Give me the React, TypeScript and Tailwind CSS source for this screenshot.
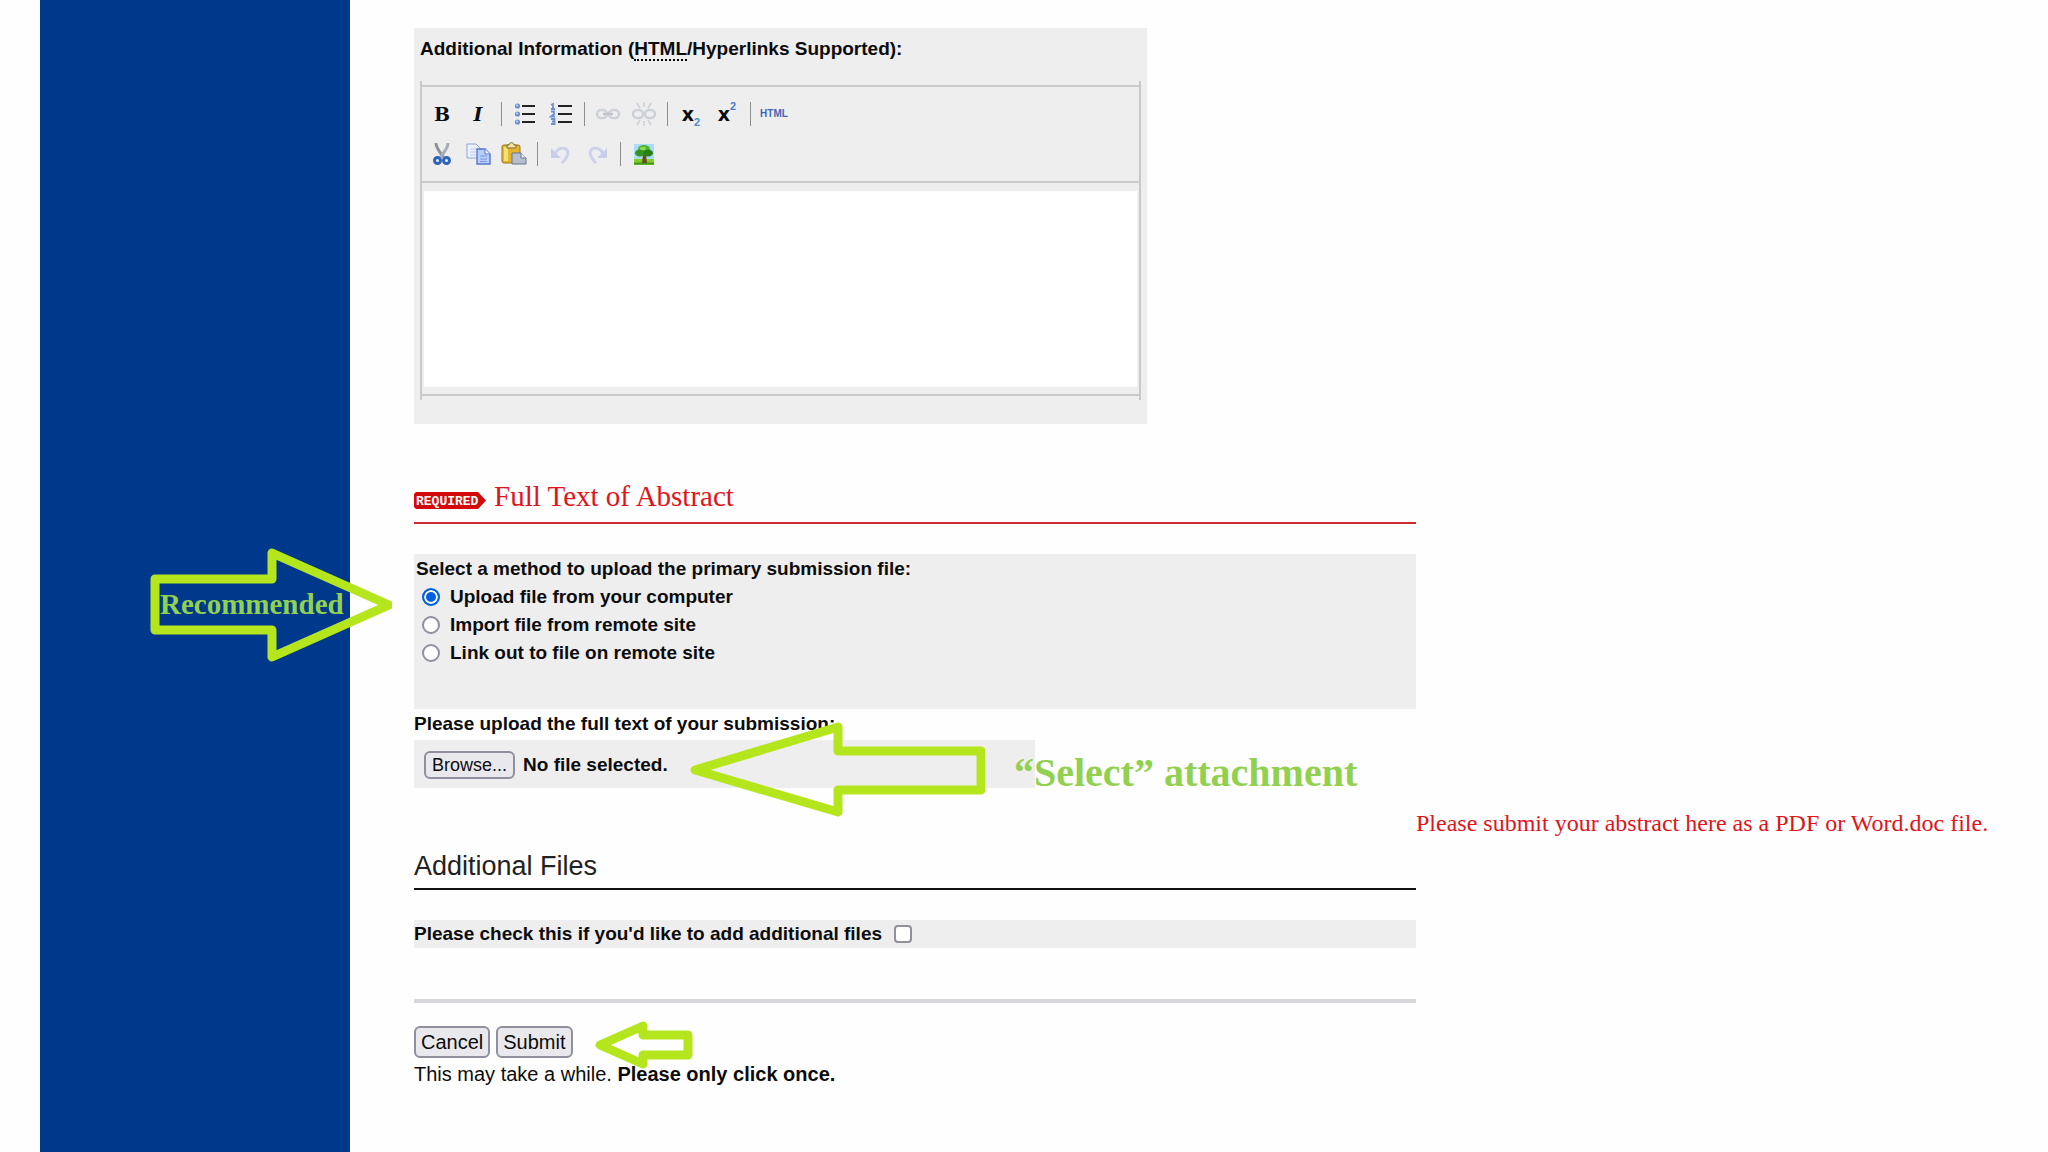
import { useRef } from 'react';
import type { ReactNode } from 'react';

interface ToolButtonProps {
    label: string;
    disabled?: boolean;
    children: ReactNode;
}

function ToolButton({ label, disabled, children }: ToolButtonProps) {
    return (
        <button type="button" aria-label={label} disabled={disabled} className="flex h-7 w-9 items-center justify-center">
            {children}
        </button>
    );
}

function Separator() {
    return (
        <span className="flex w-[11px] justify-center">
            <span className="h-6 w-px bg-[#8f8f8f]" />
        </span>
    );
}

function BulletIcon() {
    return (
        <svg width="22" height="22" viewBox="0 0 22 22">
            {[3, 11, 19].map((y) => (
                <g key={y}>
                    <circle cx="3.5" cy={y} r="2.6" fill="#6f8fd0" />
                    <circle cx="3" cy={y - 0.6} r="0.9" fill="#d5e0f7" />
                    <path d={`M8 ${y}h13`} stroke="#222" strokeWidth="2" />
                </g>
            ))}
        </svg>
    );
}

function NumberIcon() {
    return (
        <svg width="24" height="24" viewBox="0 0 24 24">
            <g fill="none" stroke="#6f8fd0" strokeWidth="1.8">
                <path d="M2 3l2-1v5M2 7h4" />
                <path d="M2 9.500h3v2.500L2 14.500h4" />
                <path d="M2 17h3.500v5H2M3 19.500h2.500" />
            </g>
            <path d="M9 4h14M9 12h14M9 20h14" stroke="#222" strokeWidth="2" />
        </svg>
    );
}

function LinkIcon({ broken }: { broken?: boolean }) {
    return (
        <svg width="26" height="26" viewBox="0 0 26 26" fill="none" stroke="#cdd0d5" strokeWidth="2.400">
            <rect x="2" y="9" width="10" height="8" rx="4" />
            <rect x="14" y="9" width="10" height="8" rx="4" />
            {broken ? (
                <path d="M13 1v5M6 2l3 5M20 2l-3 5M13 20v5M6 24l3-5M20 24l-3-5" strokeWidth="1.500" />
            ) : (
                <path d="M8 13h10" stroke="#bfc3ca" strokeWidth="2.500" />
            )}
        </svg>
    );
}

function CutIcon() {
    return (
        <svg width="18" height="24" viewBox="0 0 18 24" fill="none">
            <path d="M3 1c0 5 3 8 7.500 14" stroke="#8d929c" strokeWidth="3" />
            <path d="M15 1c0 5-3 8-7.500 14" stroke="#a7acb6" strokeWidth="3" />
            <ellipse cx="4.500" cy="18.500" rx="3" ry="3" stroke="#2f64b8" strokeWidth="3" />
            <ellipse cx="13.500" cy="18.500" rx="3" ry="3" stroke="#2f64b8" strokeWidth="3" />
        </svg>
    );
}

function CopyIcon() {
    return (
        <svg width="26" height="24" viewBox="0 0 26 24">
            <path d="M2 2h9l4 4v10H2z" fill="#eef3fd" stroke="#8ba3d3" />
            <path d="M5 7h6M5 10h6M5 13h6" stroke="#b5c6ea" />
            <path d="M12 7h8l5 5v10H12z" fill="#b9cff8" stroke="#5478cf" strokeWidth="1.400" />
            <path d="M20 7v5h5" fill="#eef3fd" stroke="#5478cf" />
            <path d="M15 14h7M15 17h7M15 19.500h7" stroke="#7898e2" />
        </svg>
    );
}

function PasteIcon() {
    return (
        <svg width="28" height="24" viewBox="0 0 28 24">
            <rect x="2" y="3" width="18" height="18" rx="2" fill="#e3b62e" stroke="#9a7420" />
            <path d="M4 5h4v14H4z" fill="#f7df78" />
            <path d="M7 6V3h2c0-3 5-3 5 0h2v3z" fill="#f2e29c" stroke="#7e6a35" />
            <path d="M12 11h9l5 5v6H12z" fill="#b4c0d1" stroke="#67758d" />
            <path d="M21 11v5h5" fill="#eef2f8" stroke="#67758d" />
        </svg>
    );
}

function UndoIcon({ flip }: { flip?: boolean }) {
    return (
        <svg width="22" height="22" viewBox="0 0 22 22" className={flip ? '-scale-x-100' : undefined}>
            <path d="M5 11c2-6 12-9 13-1 0 4-3 7-6 10" fill="none" stroke="#cdd1ec" strokeWidth="3" />
            <path d="M1 5v10h10z" fill="#c8cdea" />
        </svg>
    );
}

function ImageIcon() {
    return (
        <svg width="20" height="21" viewBox="0 0 20 21">
            <rect width="20" height="21" fill="#a9dcf5" />
            <rect y="15" width="20" height="6" fill="#7fd12e" />
            <path d="M0 19.500h20" stroke="#3c9a17" strokeWidth="2" />
            <path d="M9 11h3l1 8H8z" fill="#6f4a1c" />
            <ellipse cx="10" cy="5" rx="6" ry="4" fill="#4fb42e" />
            <ellipse cx="6" cy="9" rx="5" ry="3.500" fill="#359320" />
            <ellipse cx="14" cy="9" rx="5" ry="3.500" fill="#2b7f19" />
            <ellipse cx="9" cy="4.500" rx="3" ry="1.800" fill="#8bdc52" />
        </svg>
    );
}

function RequiredBadge() {
    return (
        <svg width="72" height="17" viewBox="0 0 72 17" role="img" aria-label="Required" className="mt-3 shrink-0">
            <path d="M2 0h62l8 8.500L64 17H2L0 15V2z" fill="#d40a0a" />
            <text x="2" y="13" fill="#fff" className="font-['Liberation_Mono',monospace] text-[13px] font-bold">
                REQUIRED
            </text>
        </svg>
    );
}

const methods = [
    { id: 'upload', label: 'Upload file from your computer' },
    { id: 'import', label: 'Import file from remote site' },
    { id: 'link', label: 'Link out to file on remote site' },
];

export default function App() {
    const fileInput = useRef<HTMLInputElement>(null);

    return (
        <div className="flex min-h-screen overflow-x-hidden bg-[#fefefe] pl-10 font-['Liberation_Sans',Arial,sans-serif] text-[19px] leading-6 text-[#0c0c0c]">
            {/* Sidebar */}
            <aside className="relative w-[310px] shrink-0 bg-[#00398b]">
                <svg width="244" height="116" viewBox="0 0 244 116" className="absolute top-[547px] left-[108px] z-10">
                    <path d="M7 32h117V6l117 52-117 52V83H7z" fill="none" stroke="#b5e61d" strokeWidth="9" strokeLinejoin="round" />
                </svg>
                <p className="absolute top-[588px] left-[120px] z-20 font-['Liberation_Serif',serif] text-[29px] leading-8 font-bold text-[#92d050]">
                    Recommended
                </p>
            </aside>

            <main className="min-w-0 flex-1 pt-7 pl-16">
                {/* Additional information */}
                <section className="max-w-[733px] bg-[#efeeef] px-1.5 pt-[9px] pb-6">
                    <label htmlFor="info" className="block pb-5 font-bold">
                        Additional Information (
                        <abbr title="HyperText Markup Language" className="border-b-2 border-dotted border-black leading-5 no-underline">
                            HTML
                        </abbr>
                        /Hyperlinks Supported):
                    </label>
                    <div className="border-x-2 border-[#c9c9cc] py-1">
                        <div className="flex flex-col gap-3 border-y-2 border-[#c9c9cc] px-0.5 py-[13px]">
                            <div className="flex items-center">
                                <ToolButton label="Bold">
                                    <span className="font-['DejaVu_Serif',serif] text-[19px] font-bold">B</span>
                                </ToolButton>
                                <ToolButton label="Italic">
                                    <span className="font-['DejaVu_Serif',serif] text-[19px] font-bold italic">I</span>
                                </ToolButton>
                                <Separator />
                                <ToolButton label="Bulleted list">
                                    <BulletIcon />
                                </ToolButton>
                                <ToolButton label="Numbered list">
                                    <NumberIcon />
                                </ToolButton>
                                <Separator />
                                <ToolButton label="Insert link" disabled>
                                    <LinkIcon />
                                </ToolButton>
                                <ToolButton label="Remove link" disabled>
                                    <LinkIcon broken />
                                </ToolButton>
                                <Separator />
                                <ToolButton label="Subscript">
                                    <span className="font-['DejaVu_Sans',sans-serif] text-[19px] font-bold">x</span>
                                    <span className="self-end text-[11px] leading-3 font-bold text-[#4a8fc7]">2</span>
                                </ToolButton>
                                <ToolButton label="Superscript">
                                    <span className="font-['DejaVu_Sans',sans-serif] text-[19px] font-bold">x</span>
                                    <span className="self-start text-[11px] leading-3 font-bold text-[#4a7fc7]">2</span>
                                </ToolButton>
                                <Separator />
                                <ToolButton label="Edit HTML source">
                                    <span className="text-[10px] font-bold text-[#3f66b5]">HTML</span>
                                </ToolButton>
                            </div>
                            <div className="flex items-center">
                                <ToolButton label="Cut">
                                    <CutIcon />
                                </ToolButton>
                                <ToolButton label="Copy">
                                    <CopyIcon />
                                </ToolButton>
                                <ToolButton label="Paste">
                                    <PasteIcon />
                                </ToolButton>
                                <Separator />
                                <ToolButton label="Undo" disabled>
                                    <UndoIcon />
                                </ToolButton>
                                <ToolButton label="Redo" disabled>
                                    <UndoIcon flip />
                                </ToolButton>
                                <Separator />
                                <ToolButton label="Insert image">
                                    <ImageIcon />
                                </ToolButton>
                            </div>
                        </div>
                        <div className="border-b-2 border-[#c9c9cc] px-0.5 pt-2 pb-[7px]">
                            <textarea id="info" className="block h-[196px] w-full resize-none bg-white p-2 font-normal" />
                        </div>
                    </div>
                </section>

                {/* Full text */}
                <h2 className="mt-14 flex max-w-[1002px] gap-2 border-b-2 border-[#cb2a2f] pb-2.5 font-['Liberation_Serif',serif] text-[29px] leading-8 text-[#e0141b]">
                    <RequiredBadge />
                    Full Text of Abstract
                </h2>
                <fieldset className="mt-[30px] block h-[155px] max-w-[1002px] bg-[#efeeef] px-0.5 pt-[3px] font-bold">
                    <legend className="float-left w-full">Select a method to upload the primary submission file:</legend>
                    <div className="clear-both flex flex-col gap-1 pt-1 pl-1.5">
                        {methods.map((method) => (
                            <label key={method.id} className="flex items-center gap-2.5">
                                <input
                                    type="radio"
                                    name="method"
                                    defaultChecked={method.id === 'upload'}
                                    className="size-[18px] appearance-none rounded-full border-2 border-[#8f8f9d] bg-white checked:border-[#0060df] checked:bg-[#0060df] checked:shadow-[inset_0_0_0_2px_white]"
                                />
                                {method.label}
                            </label>
                        ))}
                    </div>
                </fieldset>

                <label htmlFor="file" className="block pt-[3px] pb-1 font-bold">
                    Please upload the full text of your submission:
                </label>
                <div className="relative flex h-12 max-w-[621px] items-center gap-2 bg-[#efeeef] px-2.5 pt-0.5 font-bold">
                    <input id="file" ref={fileInput} type="file" tabIndex={-1} className="sr-only" />
                    <button
                        type="button"
                        onClick={() => fileInput.current?.click()}
                        className="h-7 rounded-md border-2 border-[#8f8f9d] bg-[#e9e9ed] px-1.5 text-[18px] leading-6 font-normal"
                    >
                        Browse...
                    </button>
                    <span>No file selected.</span>
                    <svg width="300" height="100" viewBox="0 0 300 100" className="absolute -top-[19px] left-[271px]">
                        <path d="M296 30H153V6L10 49l143 42V69h143z" fill="none" stroke="#b5e61d" strokeWidth="9" strokeLinejoin="round" />
                    </svg>
                    <p className="absolute top-[13px] left-[600px] font-['Liberation_Serif',serif] text-[40px] leading-10 whitespace-nowrap text-[#92d050]">
                        “Select” attachment
                    </p>
                </div>
                <p className="pt-[19px] pl-[1002px] font-['Liberation_Serif',serif] text-[24px] leading-8 whitespace-nowrap text-[#e0141b]">
                    Please submit your abstract here as a PDF or Word.doc file.
                </p>

                {/* Additional files */}
                <h2 className="mt-[11px] max-w-[1002px] border-b-2 border-[#111] pb-1.5 text-[27px] leading-8 text-[#222]">Additional Files</h2>
                <div className="mt-[30px] flex h-7 max-w-[1002px] items-center gap-3 bg-[#efeeef] font-bold">
                    <label htmlFor="more">Please check this if you'd like to add additional files</label>
                    <input id="more" type="checkbox" className="size-[18px] appearance-none rounded-sm border-2 border-[#8f8f9d] bg-white" />
                </div>
                <hr className="mt-[51px] max-w-[1002px] border-t-4 border-[#d9d9db]" />

                <div className="relative mt-[23px] flex gap-1.5">
                    <button type="button" className="h-8 rounded-md border-2 border-[#8f8f9d] bg-[#e9e9ed] px-[5px] text-xl leading-7">
                        Cancel
                    </button>
                    <button type="submit" className="h-8 rounded-md border-2 border-[#8f8f9d] bg-[#e9e9ed] px-[5px] text-xl leading-7">
                        Submit
                    </button>
                    <svg width="110" height="52" viewBox="0 0 110 52" className="absolute -top-[7px] left-[176px]">
                        <path d="M98 16H53V7L10 26l43 19v-9h45z" fill="none" stroke="#b5e61d" strokeWidth="9" strokeLinejoin="round" />
                    </svg>
                </div>
                <p className="pt-1 text-xl leading-6">
                    This may take a while. <b>Please only click once.</b>
                </p>
            </main>
        </div>
    );
}
